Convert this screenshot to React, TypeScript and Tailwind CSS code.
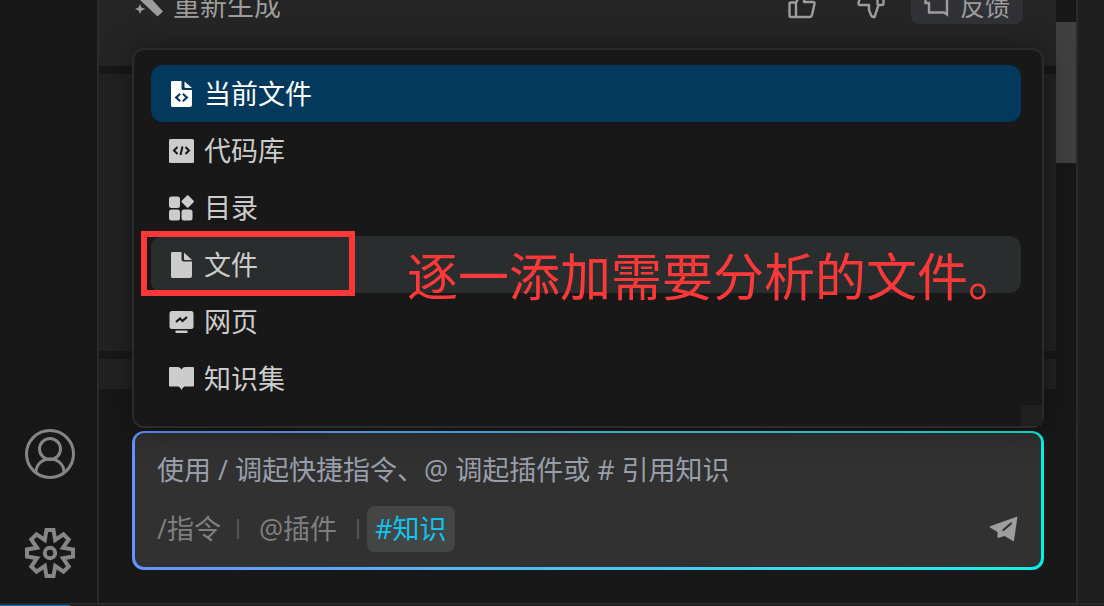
import React from 'react';
import clsx from 'clsx';

const menuItems = [
  { id: 'current', label: '当前文件', icon: FileCodeIcon, state: 'selected' },
  { id: 'repo', label: '代码库', icon: CodeBoxIcon, state: 'normal' },
  { id: 'folder', label: '目录', icon: DirectoryIcon, state: 'normal' },
  { id: 'file', label: '文件', icon: FileIcon, state: 'hovered' },
  { id: 'web', label: '网页', icon: WebPageIcon, state: 'normal' },
  { id: 'knowledge', label: '知识集', icon: BookIcon, state: 'normal' }
];

type IconProps = { className?: string };

function FileCodeIcon({ className }: IconProps) {
  return (
    <svg viewBox="0 0 26 26" className={className} fill="currentColor">
      <path
        fillRule="evenodd"
        d="M4 0H13.500V7.500Q13.500 9 15 9H24V24Q24 26 22 26H4.500Q3 26 3 24.500V1Q3 0 4 0ZM11.500 12L6.500 16.500L11.500 21L12.800 19.500L9.800 16.500L12.800 13.500ZM15.500 12L14.200 13.500L17.200 16.500L14.200 19.500L15.500 21L20.500 16.500Z"
      />
      <path d="M16.500 0.500L24 7H17.500Q16.500 7 16.500 6Z" />
    </svg>
  );
}

function FileIcon({ className }: IconProps) {
  return (
    <svg viewBox="0 0 26 26" className={className} fill="currentColor">
      <path d="M4 0H13.500V7.500Q13.500 9.500 15.500 9.500H24V24Q24 26 22 26H4.500Q3 26 3 24.500V1.500Q3 0 4 0Z" />
      <path d="M16 0.500L24 8H17Q16 8 16 7Z" />
    </svg>
  );
}

function CodeBoxIcon({ className }: IconProps) {
  return (
    <svg viewBox="0 0 26 26" className={className}>
      <rect x="1" y="1" width="25" height="24" rx="1.500" fill="currentColor" />
      <path d="M9.500 9L6 12.500L9.500 16M17.500 9L21 12.500L17.500 16M14.500 8.500L12.500 17" fill="none" stroke="#181818" strokeWidth="2" />
    </svg>
  );
}

function DirectoryIcon({ className }: IconProps) {
  return (
    <svg viewBox="0 0 26 26" className={className} fill="currentColor">
      <rect x="1" y="1.500" width="11" height="11.500" rx="2.500" />
      <rect x="1" y="14.500" width="11" height="11" rx="2.500" />
      <rect x="13.500" y="14.500" width="11" height="11" rx="2.500" />
      <rect x="15" y="1.800" width="9.400" height="9.400" rx="1" transform="rotate(45 19.700 6.500)" />
    </svg>
  );
}

function WebPageIcon({ className }: IconProps) {
  return (
    <svg viewBox="0 0 26 26" className={className}>
      <rect x="1.500" y="2" width="24" height="18" rx="2.500" fill="currentColor" />
      <rect x="7.500" y="21.500" width="12" height="2.500" fill="currentColor" />
      <path d="M8 13L12 9.500L14.500 12L19 8" fill="none" stroke="#181818" strokeWidth="2.200" />
    </svg>
  );
}

function BookIcon({ className }: IconProps) {
  return (
    <svg viewBox="0 0 26 26" className={className} fill="currentColor">
      <path d="M2 1H10Q12.500 1 13.500 3.500Q14.500 1 17 1H25Q26 1 26 2V19.500Q26 20.500 25 20.500H17Q15 20.500 13.500 24Q12 20.500 10 20.500H2Q1 20.500 1 19.500V2Q1 1 2 1Z" />
    </svg>
  );
}

function WandIcon({ className }: IconProps) {
  return (
    <svg viewBox="0 0 28 28" className={className} fill="currentColor">
      <path d="M7 5L12 2L28 19.500L22.500 24.500L5 8Z" />
      <path d="M5 12L6.500 15.500L10.500 17L6.500 18.500L5 22L3.500 18.500L0 17L3.500 15.500Z" />
    </svg>
  );
}

function ThumbUpIcon({ className }: IconProps) {
  return (
    <svg viewBox="0 0 28 28" className={className} fill="none" stroke="currentColor" strokeWidth="2.400" strokeLinejoin="round">
      <path d="M8 10.500L13 1.500Q17 1.500 16.500 5.500L16 10H25Q27 10 26.500 12L24 23Q23.500 25 21.500 25H3Q1.500 25 1.500 23.500V12Q1.500 10.500 3 10.500H8V25" />
    </svg>
  );
}

function ThumbDownIcon({ className }: IconProps) {
  return (
    <svg viewBox="0 0 28 28" className={className} fill="none" stroke="currentColor" strokeWidth="2.400" strokeLinejoin="round">
      <path d="M20.500 2H6.500Q4.500 2 4 4L1.500 10.500V11.500Q1.500 13 3 13H12V18L14 23Q15 25.500 17.500 25L21.500 13H25Q26.500 13 26.500 11.500V3.500Q26.500 2 25 2H20.500V13" />
    </svg>
  );
}

function FeedbackIcon({ className }: IconProps) {
  return (
    <svg viewBox="0 0 26 26" className={className} fill="none" stroke="currentColor" strokeWidth="2.400">
      <path d="M1.500 1V10H5V19.500H20L23 21.500V1H1.500" />
    </svg>
  );
}

function SendIcon({ className }: IconProps) {
  return (
    <svg viewBox="0 0 30 26" className={className}>
      <path
        d="M28.500 0.500L25 24.500Q24.800 25.500 24 25L15.500 20L9.500 22Q8.500 22 8.500 21V16L1 11.500Q0 10.800 1 10.300Z"
        fill="currentColor"
      />
      <path d="M14.500 14L22 7.500" stroke="#313131" strokeWidth="2.200" strokeLinecap="round" />
    </svg>
  );
}

function AccountIcon({ className }: IconProps) {
  return (
    <svg viewBox="0 0 50 50" className={className} fill="none" stroke="currentColor" strokeWidth="3">
      <circle cx="25" cy="25" r="23.500" />
      <circle cx="25" cy="20" r="10.500" />
      <path d="M11 43.500C11 35.500 17 30 25 30S39 35.500 39 43.500" />
    </svg>
  );
}

function GearIcon({ className }: IconProps) {
  return (
    <svg viewBox="0 0 50 50" className={className} fill="none" stroke="currentColor" strokeWidth="4">
      <path d="M21.500 2H28.500L30.200 12L38.500 6.300L43.700 11.500L38 19.800L48 21.500V28.500L38 30.200L43.700 38.500L38.500 43.700L30.200 38L28.500 48H21.500L19.800 38L11.500 43.700L6.300 38.500L12 30.200L2 28.500V21.500L12 19.800L6.300 11.500L11.500 6.300L19.800 12Z" />
      <circle cx="25" cy="25" r="5.200" />
    </svg>
  );
}

function ActivityBar() {
  return (
    <nav className="flex w-[99px] shrink-0 flex-col items-center justify-end gap-[49px] border-r-2 border-[#2b2b2b] pb-[25px] pl-0.5 text-[#868686]">
      <button aria-label="Account">
        <AccountIcon className="size-[50px]" />
      </button>
      <button aria-label="Settings">
        <GearIcon className="size-[50px]" />
      </button>
    </nav>
  );
}

function Messages() {
  return (
    <div className="flex min-h-0 flex-1 flex-col justify-end gap-2 overflow-hidden pb-[42px]">
      <div className="flex shrink-0 items-center bg-[#252525] pr-[33px] pb-[42px] pl-9 text-[#9d9d9d]">
        <button className="flex items-center gap-2.5">
          <WandIcon className="size-7" />
          <span>重新生成</span>
        </button>
        <div className="ml-auto flex items-center">
          <button aria-label="Like">
            <ThumbUpIcon className="size-7" />
          </button>
          <span className="mx-5 h-6 w-px bg-[#20252c]" />
          <button aria-label="Dislike">
            <ThumbDownIcon className="size-7" />
          </button>
          <button className="ml-[26px] flex h-9 items-center gap-2.5 rounded-lg bg-[#313237] px-[13px] text-[25px]">
            <FeedbackIcon className="size-[26px]" />
            反馈
          </button>
        </div>
      </div>
      <div className="h-[277px] shrink-0 bg-[#222222]" />
      <div className="h-[30px] shrink-0 bg-[#222222]" />
    </div>
  );
}

function KnowledgeMenu() {
  return (
    <div className="absolute inset-x-0 bottom-full z-10 mb-[3px] rounded-xl border-2 border-[#2b2b2b] bg-[#181818] pt-[15px] pr-[21px] pb-[19px] pl-[17px] shadow-[0_0_32px_rgba(0,0,0,0.4)]">
      <ul>
        {menuItems.map((item) => (
          <li key={item.id}>
            <button
              className={clsx(
                'flex h-[57px] w-full items-center gap-2.5 rounded-xl px-[17px] text-left',
                item.state === 'selected' && 'bg-[#04395e] text-white',
                item.state === 'hovered' && 'bg-[#2a2d2e] text-[#cccccc]',
                item.state === 'normal' && 'text-[#cccccc]'
              )}
            >
              <item.icon className="size-[26px]" />
              {item.label}
            </button>
          </li>
        ))}
      </ul>
      <span className="absolute right-0 bottom-0 size-[21px] bg-[#202020]" />
      <span className="absolute top-[181px] left-[7px] h-[65px] w-[214px] border-6 border-[#fd3838]" />
      <p className="absolute top-[190px] left-[273px] text-[51px] leading-[72px] whitespace-nowrap text-[#fd3838]">
        逐一添加需要分析的文件。
      </p>
    </div>
  );
}

function Composer() {
  return (
    <div className="relative mr-3 mb-[33px] ml-[33px]">
      <KnowledgeMenu />
      <div className="rounded-xl bg-linear-to-r from-[#6393ff] to-[#06f0e6] px-[3px] pt-0.5 pb-[3px]">
        <div className="rounded-[9px] bg-[#313131] px-[22px] pt-3 pb-[15px]">
          <input
            aria-label="消息"
            placeholder="使用 / 调起快捷指令、@ 调起插件或 # 引用知识"
            className="block h-12 w-full bg-transparent outline-none placeholder:text-[#989fab]"
          />
          <div className="mt-[13px] flex h-[46px] items-center text-[#7f7f7f]">
            <button>/指令</button>
            <span className="mr-5 ml-4 h-5 w-0.5 bg-[#555555]" />
            <button>@插件</button>
            <span className="mr-2 ml-5 h-5 w-0.5 bg-[#555555]" />
            <button className="h-[46px] rounded-lg bg-[#444646] px-2 text-[#0fc4ee]">#知识</button>
            <button aria-label="Send" className="ml-auto text-[#9d9d9d]">
              <SendIcon className="h-[26px] w-[30px]" />
            </button>
          </div>
        </div>
      </div>
    </div>
  );
}

export default function App() {
  return (
    <div className="flex h-screen flex-col overflow-hidden bg-[#181818] font-['Open_Sans','Noto_Sans_CJK_SC',sans-serif] text-[27px] leading-9">
      <div className="flex min-h-0 flex-1">
        <ActivityBar />
        <main className="flex min-w-0 flex-1">
          <div className="flex min-w-0 flex-1 flex-col">
            <Messages />
            <Composer />
          </div>
          <div className="w-5 shrink-0 pt-[22px]">
            <div className="h-[141px] bg-[#404040]" />
          </div>
        </main>
        <aside className="w-7 shrink-0 border-l-2 border-[#2b2b2b] bg-[#1f1f1f]" />
      </div>
      <footer className="h-[3px] shrink-0 border-t-2 border-[#2b2b2b]">
        <div className="h-px w-[70px] bg-[#0078d4]" />
      </footer>
    </div>
  );
}
